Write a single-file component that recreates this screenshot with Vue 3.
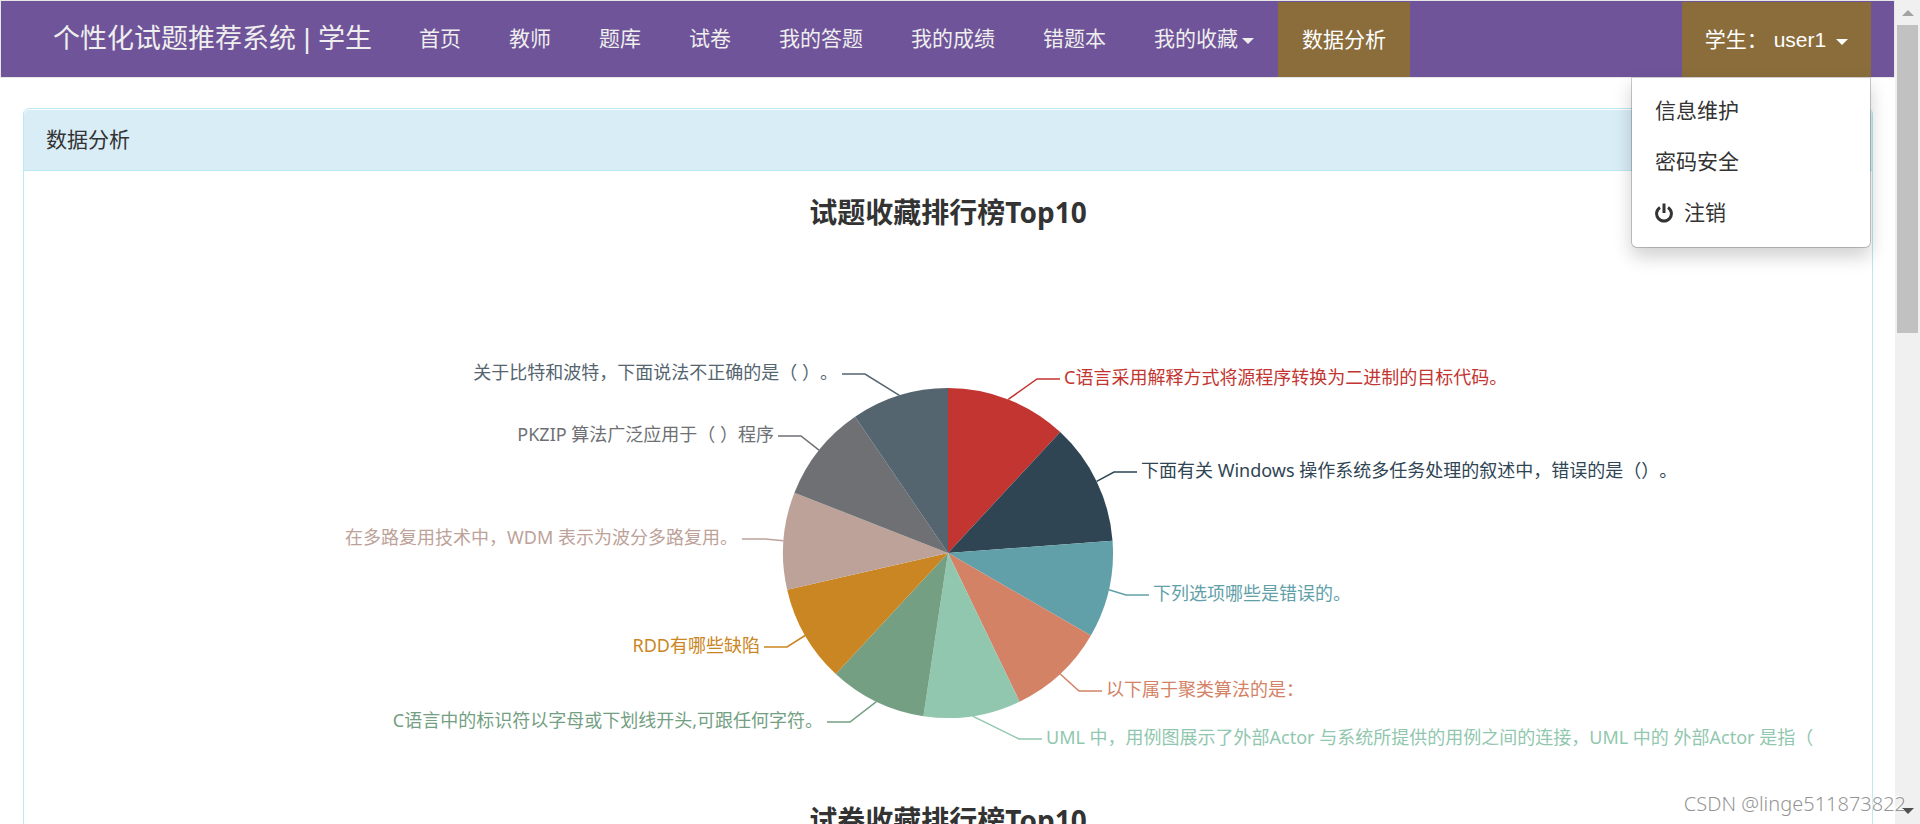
<script setup>
import { ref } from 'vue'

const navItems = [
  { text: '首页' },
  { text: '教师' },
  { text: '题库' },
  { text: '试卷' },
  { text: '我的答题' },
  { text: '我的成绩' },
  { text: '错题本' },
  { text: '我的收藏', caret: true },
  { text: '数据分析', active: true },
]

const menuOpen = ref(true)

// Coordinates are relative to the centre of the pie.
const radius = 165
const slices = [
  { value: 5, color: '#c23531', label: 'C语言采用解释方式将源程序转换为二进制的目标代码。', elbow: 89, y: -174 },
  { value: 5, color: '#2f4554', label: '下面有关 Windows 操作系统多任务处理的叙述中，错误的是（）。', elbow: 166, y: -81 },
  { value: 4, color: '#61a0a8', label: '下列选项哪些是错误的。', elbow: 178, y: 42 },
  { value: 4, color: '#d48265', label: '以下属于聚类算法的是：', elbow: 131, y: 138 },
  { value: 4, color: '#91c7ae', label: 'UML 中，用例图展示了外部Actor 与系统所提供的用例之间的连接，UML 中的 外部Actor 是指（', elbow: 71, y: 186 },
  { value: 4, color: '#749f83', label: 'C语言中的标识符以字母或下划线开头,可跟任何字符。', elbow: -98, y: 169 },
  { value: 4, color: '#ca8622', label: 'RDD有哪些缺陷', elbow: -161, y: 94 },
  { value: 4, color: '#bda29a', label: '在多路复用技术中，WDM 表示为波分多路复用。', elbow: -183, y: -14 },
  { value: 4, color: '#6e7074', label: 'PKZIP 算法广泛应用于（ ）程序', elbow: -147, y: -117 },
  { value: 4, color: '#546570', label: '关于比特和波特，下面说法不正确的是（ ）。', elbow: -83, y: -179 },
]

const total = slices.reduce((sum, s) => sum + s.value, 0)
const point = (turn) => [
  radius * Math.sin(turn * 2 * Math.PI),
  -radius * Math.cos(turn * 2 * Math.PI),
]

let start = 0
const pie = slices.map((s) => {
  const end = start + s.value
  const a = point(start / total)
  const b = point(end / total)
  const m = point((start + end) / 2 / total)
  start = end
  const side = s.elbow > 0 ? 1 : -1
  return {
    ...s,
    path: `M0 0L${a}A${radius} ${radius} 0 0 1 ${b}Z`,
    line: `${m} ${s.elbow},${s.y} ${s.elbow + 23 * side},${s.y}`,
    textX: s.elbow + 27 * side,
    anchor: side > 0 ? 'start' : 'end',
  }
})
</script>

<template>
  <div class="window">
    <div class="page">
      <nav class="navbar">
        <a class="brand" href="#">个性化试题推荐系统 | 学生</a>
        <ul class="nav">
          <li v-for="item in navItems" :key="item.text">
            <a href="#" class="nav-link" :class="{ active: item.active }">
              {{ item.text }}<span v-if="item.caret" class="caret"></span>
            </a>
          </li>
        </ul>
        <div class="user">
          <button class="nav-link active" type="button" :aria-expanded="menuOpen" @click="menuOpen = !menuOpen">
            学生：&nbsp;user1&nbsp;<span class="caret"></span>
          </button>
          <ul v-if="menuOpen" class="menu">
            <li><a href="#">信息维护</a></li>
            <li><a href="#">密码安全</a></li>
            <li>
              <a href="#">
                <svg class="power" viewBox="0 0 18 20" aria-hidden="true">
                  <path d="M5 4.4A7.4 7.4 0 1 0 13 4.4" />
                  <path d="M9 0.5V10" />
                </svg>
                注销
              </a>
            </li>
          </ul>
        </div>
      </nav>

      <main class="panel">
        <header class="panel-head">数据分析</header>
        <div class="panel-body">
          <section class="chart">
            <h2>试题收藏排行榜Top10</h2>
            <svg class="plot" role="img" aria-label="试题收藏排行榜Top10">
              <svg x="50%" y="320" class="centre">
                <path v-for="s in pie" :key="s.color" :d="s.path" :fill="s.color" />
                <g v-for="s in pie" :key="s.label">
                  <polyline :points="s.line" :stroke="s.color" />
                  <text :x="s.textX" :y="s.y + 5" :fill="s.color" :text-anchor="s.anchor">{{ s.label }}</text>
                </g>
              </svg>
            </svg>
          </section>
          <section class="chart">
            <h2>试卷收藏排行榜Top10</h2>
          </section>
        </div>
      </main>
    </div>

    <div class="scrollbar" aria-hidden="true">
      <span class="arrow up"></span>
      <span class="thumb"></span>
      <span class="arrow down"></span>
    </div>
    <div class="watermark">CSDN @linge511873822</div>
  </div>
</template>

<style>
body {
  margin: 0;
  overflow: hidden;
}
</style>

<style scoped>
.window {
  position: relative;
  display: grid;
  grid-template-columns: 1fr 25px;
  height: 100vh;
  overflow: hidden;
  background: #fff;
  color: #333;
  font: 21px/30px "Liberation Sans", "Noto Sans CJK SC", sans-serif;
  text-spacing-trim: space-all;
}
.page {
  min-width: 0;
  height: 100vh;
  overflow: hidden;
}
ul {
  list-style: none;
  margin: 0;
  padding: 0;
}
a {
  color: inherit;
  text-decoration: none;
}
.navbar {
  display: flex;
  height: 76px;
  padding: 0 23px 0 28px;
  border: 1px solid #e7e7e7;
  background: #6f5499;
  color: #eee;
  white-space: nowrap;
}
.brand {
  display: flex;
  align-items: center;
  padding: 0 23px 0 24px;
  font-size: 27px;
}
.nav {
  display: flex;
}
.nav li {
  display: flex;
}
.nav-link {
  display: flex;
  align-items: center;
  padding: 0 24px;
  border: 0;
  background: none;
  color: inherit;
  font: inherit;
}
.nav-link.active {
  margin-top: 1px;
  background: #8a6d3b;
  color: #fff;
}
.caret {
  margin-left: 4px;
  margin-top: 4px;
  border: 6px solid transparent;
  border-top-color: currentColor;
  border-bottom: 0;
}
.user {
  position: relative;
  display: flex;
  margin-left: auto;
}
.user .nav-link {
  padding: 0 23px;
}
.menu {
  position: absolute;
  z-index: 2;
  top: 100%;
  right: 0;
  width: 238px;
  padding: 7px 0 9px;
  border: 1px solid rgba(0, 0, 0, 0.2);
  border-top-color: #ccc;
  border-radius: 0 0 6px 6px;
  background: #fff;
  background-clip: padding-box;
  box-shadow: 0 9px 18px rgba(0, 0, 0, 0.18);
  color: #333;
}
.menu a {
  display: flex;
  align-items: center;
  padding: 10px 23px;
  line-height: 31px;
}
.power {
  width: 18px;
  height: 20px;
  margin-right: 11px;
  fill: none;
  stroke: #333;
  stroke-width: 3;
}
.panel {
  margin: 30px 22px 0 23px;
  border: 1px solid #bce8f1;
  border-radius: 6px;
}
.panel-head {
  margin-top: 1px;
  padding: 15px 22px;
  border-bottom: 1px solid #bce8f1;
  border-radius: 5px 5px 0 0;
  background: #d9edf7;
}
.panel-body {
  padding: 20px 46px;
}
.chart {
  height: 608px;
}
.chart h2 {
  margin: 0;
  font: bold 28px/42px "Noto Sans", "Noto Sans CJK SC", sans-serif;
  text-align: center;
}
.plot {
  display: block;
  width: 100%;
  height: 566px;
  overflow: hidden;
}
.centre {
  overflow: visible;
}
.centre polyline {
  fill: none;
  stroke-width: 1.5;
}
.centre text {
  font: 18px "Noto Sans", "Noto Sans CJK SC", sans-serif;
}
.scrollbar {
  display: flex;
  flex-direction: column;
  align-items: center;
  background: #f0f0f0;
}
.arrow {
  border: 6px solid transparent;
}
.up {
  margin: 10px 0 9px;
  border-top: 0;
  border-bottom-color: #a3a3a3;
}
.down {
  margin: auto 0 10px;
  border-bottom: 0;
  border-top-color: #505050;
}
.thumb {
  width: 21px;
  height: 308px;
  background: #c1c1c1;
}
.watermark {
  position: absolute;
  right: 14px;
  bottom: 5px;
  color: rgba(120, 120, 120, 0.8);
  font: 20px/30px "Noto Sans", sans-serif;
  font-weight: 300;
  text-shadow: -1px -1px 0 #fff;
}
</style>
